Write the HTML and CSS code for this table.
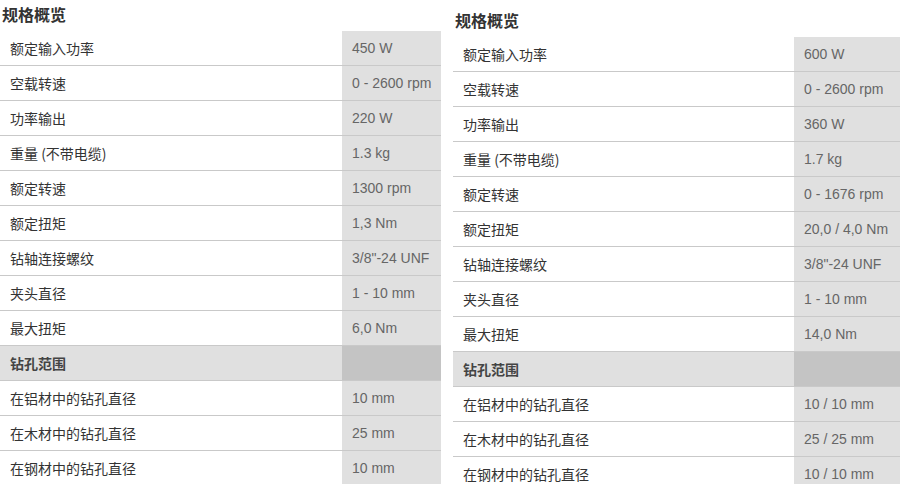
FILE: index.html
```html
<!DOCTYPE html>
<html lang="zh">
<head>
<meta charset="utf-8">
<title>规格概览</title>
<link rel="stylesheet" href="styles.css">
</head>
<body>
<div class="page">
  <section class="spec spec-left">
    <h2 class="spec-title">规格概览</h2>
    <table class="spec-table">
      <colgroup><col class="col-label"><col class="col-value"></colgroup>
      <tr><td class="label">额定输入功率</td><td class="value">450 W</td></tr>
      <tr><td class="label">空载转速</td><td class="value">0 - 2600 rpm</td></tr>
      <tr><td class="label">功率输出</td><td class="value">220 W</td></tr>
      <tr><td class="label">重量 (不带电缆)</td><td class="value">1.3 kg</td></tr>
      <tr><td class="label">额定转速</td><td class="value">1300 rpm</td></tr>
      <tr><td class="label">额定扭矩</td><td class="value">1,3 Nm</td></tr>
      <tr><td class="label">钻轴连接螺纹</td><td class="value">3/8"-24 UNF</td></tr>
      <tr><td class="label">夹头直径</td><td class="value">1 - 10 mm</td></tr>
      <tr><td class="label">最大扭矩</td><td class="value">6,0 Nm</td></tr>
      <tr class="group"><td class="label">钻孔范围</td><td class="value"></td></tr>
      <tr><td class="label">在铝材中的钻孔直径</td><td class="value">10 mm</td></tr>
      <tr><td class="label">在木材中的钻孔直径</td><td class="value">25 mm</td></tr>
      <tr><td class="label">在钢材中的钻孔直径</td><td class="value">10 mm</td></tr>
    </table>
  </section>
  <section class="spec spec-right">
    <h2 class="spec-title">规格概览</h2>
    <table class="spec-table">
      <colgroup><col class="col-label"><col class="col-value"></colgroup>
      <tr><td class="label">额定输入功率</td><td class="value">600 W</td></tr>
      <tr><td class="label">空载转速</td><td class="value">0 - 2600 rpm</td></tr>
      <tr><td class="label">功率输出</td><td class="value">360 W</td></tr>
      <tr><td class="label">重量 (不带电缆)</td><td class="value">1.7 kg</td></tr>
      <tr><td class="label">额定转速</td><td class="value">0 - 1676 rpm</td></tr>
      <tr><td class="label">额定扭矩</td><td class="value">20,0 / 4,0 Nm</td></tr>
      <tr><td class="label">钻轴连接螺纹</td><td class="value">3/8"-24 UNF</td></tr>
      <tr><td class="label">夹头直径</td><td class="value">1 - 10 mm</td></tr>
      <tr><td class="label">最大扭矩</td><td class="value">14,0 Nm</td></tr>
      <tr class="group"><td class="label">钻孔范围</td><td class="value"></td></tr>
      <tr><td class="label">在铝材中的钻孔直径</td><td class="value">10 / 10 mm</td></tr>
      <tr><td class="label">在木材中的钻孔直径</td><td class="value">25 / 25 mm</td></tr>
      <tr><td class="label">在钢材中的钻孔直径</td><td class="value">10 / 10 mm</td></tr>
    </table>
  </section>
</div>
</body>
</html>
```

FILE: styles.css
```css
html, body {
  margin: 0;
  padding: 0;
  background: #ffffff;
  overflow: hidden;
}
body {
  font-family: "Liberation Sans", Arial, "Noto Sans CJK SC", sans-serif;
  color: #333333;
}
.page {
  display: flex;
  gap: 12px;
  align-items: flex-start;
}
.spec-left {
  width: 441px;
  flex: none;
}
.spec-right {
  width: 447px;
  flex: none;
  padding-top: 6px;
}
.spec-title {
  margin: 0;
  padding-left: 2px;
  height: 31px;
  line-height: 28px;
  font-size: 16px;
  font-weight: bold;
  color: #333333;
  font-family: "Noto Sans CJK SC", sans-serif;
}
.spec-table {
  width: 100%;
  border-collapse: collapse;
  table-layout: fixed;
}
.spec-left .col-value { width: 99px; }
.spec-right .col-value { width: 106px; }
.spec-table td {
  height: 34px;
  padding: 0 0 0 10px;
  border-bottom: 1px solid #c9c9c9;
  vertical-align: middle;
  white-space: nowrap;
  overflow: hidden;
}
.label {
  font-family: "Noto Sans CJK SC", sans-serif;
  font-size: 14px;
  color: #333333;
}
.value {
  background: #e0e0e0;
  font-family: "Liberation Sans", Arial, sans-serif;
  font-size: 14px;
  color: #666666;
}
.group .label {
  background: #e0e0e0;
  font-weight: bold;
  color: #444444;
}
.group .value {
  background: #c4c4c4;
}
```
